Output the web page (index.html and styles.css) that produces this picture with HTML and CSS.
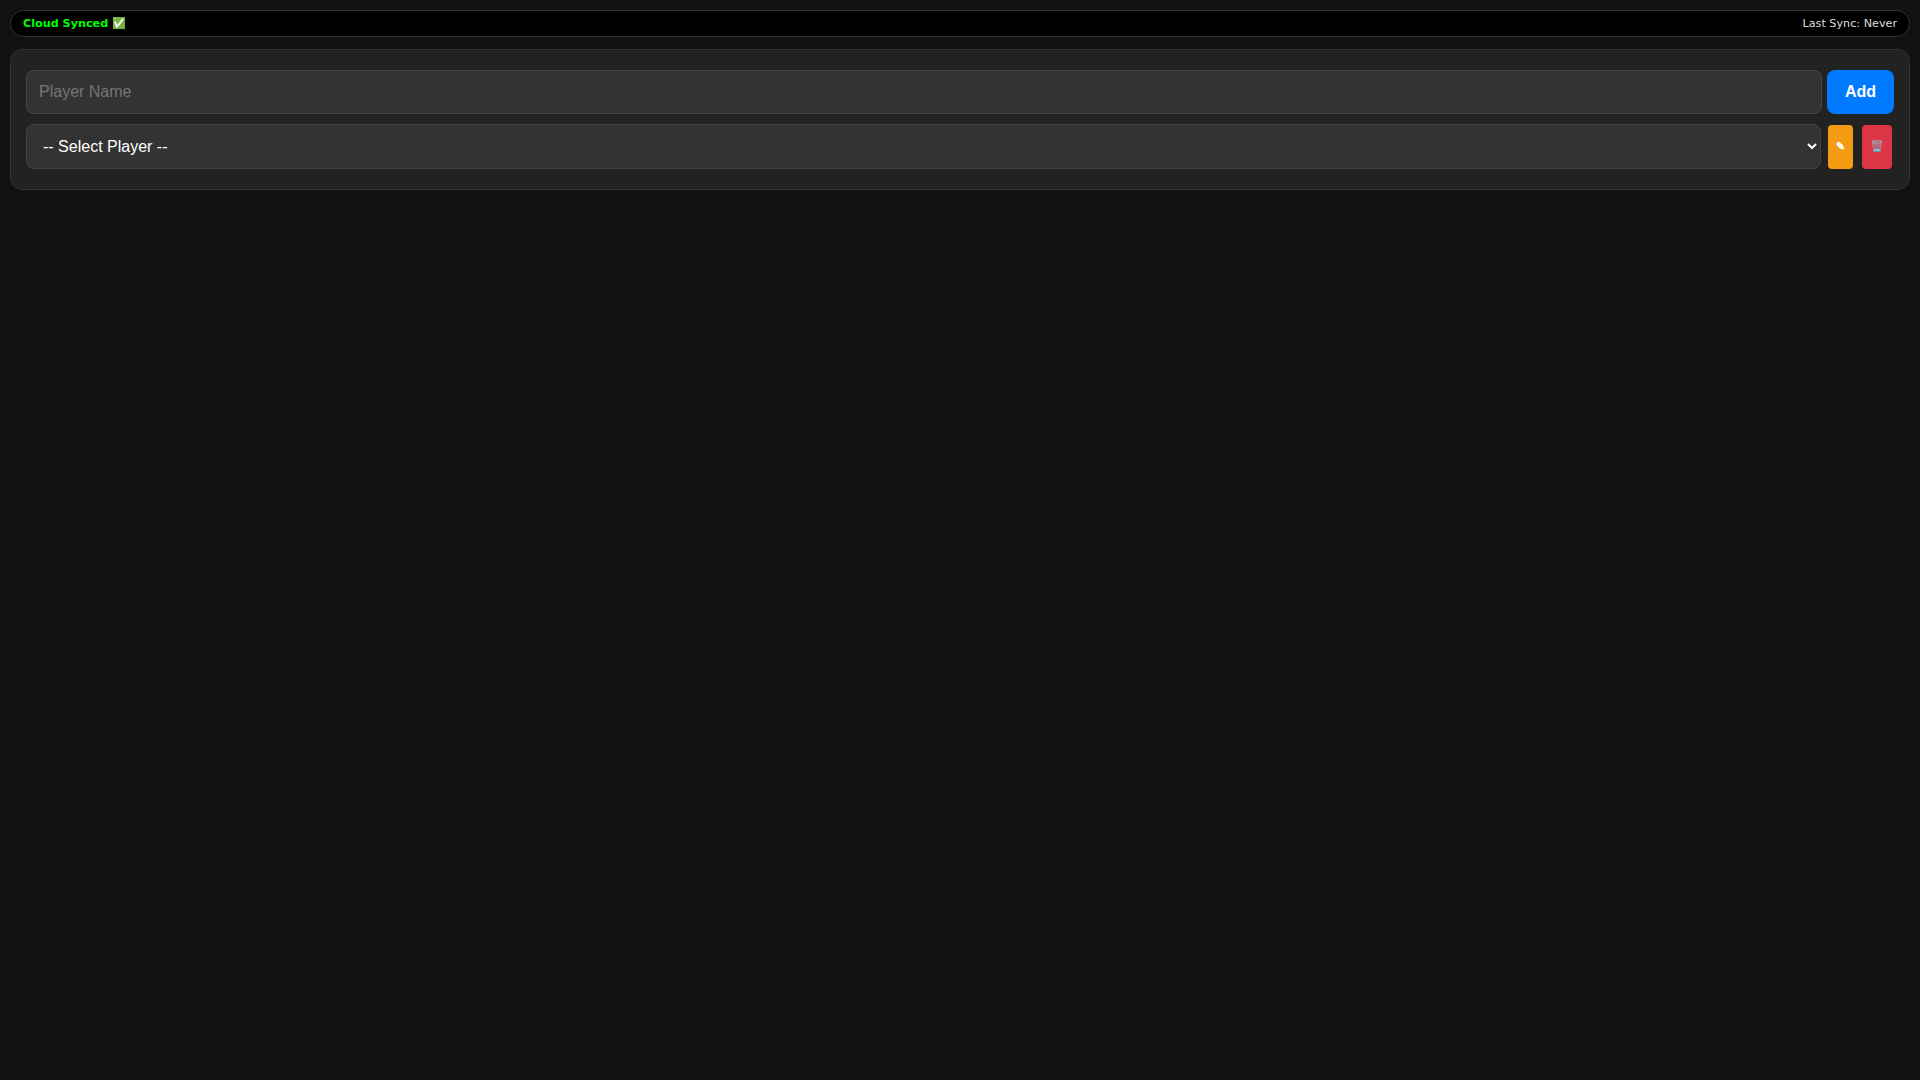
FILE: index.html
```html
<!DOCTYPE html>
<html lang="en">
<head>
  <meta charset="UTF-8" />
  <meta name="viewport" content="width=device-width, initial-scale=1.0" />
  <title>Players</title>
  <link rel="stylesheet" href="styles.css">
</head>
<body>
  <div class="sync-bar">
    <span class="sync-status">Cloud Synced ✅</span>
    <span class="sync-time">Last Sync: Never</span>
  </div>
  <div class="card">
    <div class="row">
      <input class="field" type="text" placeholder="Player Name">
      <button class="btn btn-add">Add</button>
    </div>
    <div class="row row-select">
      <select class="field field-select">
        <option>-- Select Player --</option>
      </select>
      <button class="btn btn-small btn-edit">✎</button>
      <button class="btn btn-small btn-delete">🗑️</button>
    </div>
  </div>
</body>
</html>
```

FILE: styles.css
```css
body {
  margin: 0;
  padding: 10px;
  background: #111;
  color: #fff;
  font-family: "DejaVu Sans", sans-serif;
  min-height: 100vh;
  box-sizing: border-box;
}

.sync-bar {
  display: flex;
  justify-content: space-between;
  align-items: center;
  height: 27px;
  box-sizing: border-box;
  padding: 0 12px;
  margin-bottom: 12px;
  background: #000;
  border: 1px solid #333;
  border-radius: 20px;
  font-size: 11.2px;
}
.sync-status {
  color: #0f0;
  font-weight: bold;
}
.sync-time {
  color: #ddd;
}

.card {
  background: #222;
  border: 1px solid #333;
  border-radius: 12px;
  padding: 20px 15px;
}

.row {
  display: flex;
  align-items: flex-start;
  gap: 5px;
}
.row-select {
  margin-top: 10px;
}

.field {
  flex: 1;
  min-width: 0;
  height: 44px;
  box-sizing: border-box;
  padding: 12px;
  background: #333;
  color: #fff;
  border: 1px solid #444;
  border-radius: 8px;
  font-family: "Liberation Sans", Arial, sans-serif;
  font-size: 16px;
}
.field::placeholder {
  color: #757575;
}
.field-select {
  height: 45px;
  padding-right: 10px;
}

.btn {
  border: none;
  color: #fff;
  cursor: pointer;
  font-family: "Liberation Sans", Arial, sans-serif;
  font-weight: bold;
}
.btn-add {
  width: 67px;
  height: 44px;
  background: #007bff;
  border-radius: 8px;
  font-size: 16px;
}
.btn-small {
  height: 44px;
  margin-top: 1px;
  padding: 0 0 2px;
  border-radius: 4px;
  font-size: 11.2px;
}
.btn-edit {
  width: 25px;
  margin-left: 2px;
  background: #f39c12;
}
.btn-delete {
  width: 30px;
  margin-left: 4px;
  margin-right: 2px;
  background: #dc3545;
}
```
